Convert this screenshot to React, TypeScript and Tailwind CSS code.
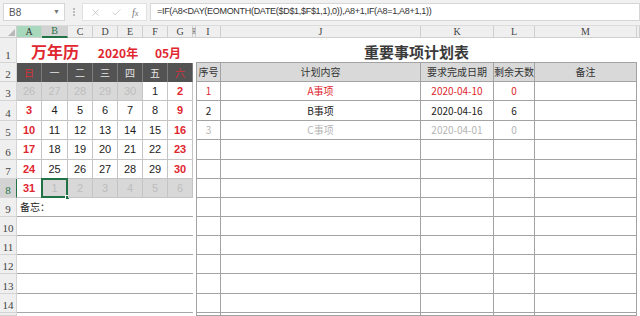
import React from 'react';
import { X, Check } from 'lucide-react';

const RED = 'text-[#e0262f]';
const cjk = { fontFamily: '"Noto Sans CJK SC", "Noto Sans", sans-serif' };
const serif = { fontFamily: '"Liberation Serif", "Noto Sans CJK SC", serif' };
const sans = { fontFamily: '"Liberation Sans", "Noto Sans CJK SC", sans-serif' };

const letters = ['A', 'B', 'C', 'D', 'E', 'F', 'G', 'H', 'I', 'J', 'K', 'L', 'M', ''];

type Day = { n: number; out?: boolean };
const weeks: Day[][] = [
  [{ n: 26, out: true }, { n: 27, out: true }, { n: 28, out: true }, { n: 29, out: true }, { n: 30, out: true }, { n: 1 }, { n: 2 }],
  [3, 4, 5, 6, 7, 8, 9].map((n) => ({ n })),
  [10, 11, 12, 13, 14, 15, 16].map((n) => ({ n })),
  [17, 18, 19, 20, 21, 22, 23].map((n) => ({ n })),
  [24, 25, 26, 27, 28, 29, 30].map((n) => ({ n })),
  [{ n: 31 }, { n: 1, out: true }, { n: 2, out: true }, { n: 3, out: true }, { n: 4, out: true }, { n: 5, out: true }, { n: 6, out: true }],
];

const weekNames = ['日', '一', '二', '三', '四', '五', '六'];

const tasks = [
  { no: '1', name: 'A事项', date: '2020-04-10', left: '0', color: 'text-[#e0262f]' },
  { no: '2', name: 'B事项', date: '2020-04-16', left: '6', color: 'text-[#222]' },
  { no: '3', name: 'C事项', date: '2020-04-01', left: '0', color: 'text-[#b5b5b5]' },
];

const RowHead: React.FC<{ n?: number; active?: boolean }> = ({ n, active }) => (
  <div
    className={`flex items-end justify-center pb-[1px] text-[11px] leading-none border-r border-b border-[#d4d4d4] ${
      active ? 'bg-[#d3d3d3] text-[#217346] border-r-[#217346]' : 'bg-[#efefef] text-[#444]'
    }`}
    style={serif}
  >
    {n}
  </div>
);

const TCell: React.FC<{ children?: React.ReactNode; className?: string; header?: boolean }> = ({ children, className = '', header }) => (
  <div
    className={`flex items-center justify-center whitespace-nowrap text-[10px] leading-none border-r border-b border-[#a3a3a3] ${
      header ? 'bg-[#d9d9d9] text-[#333]' : 'bg-white'
    } ${className}`}
    style={cjk}
  >
    {children}
  </div>
);

const TableRow: React.FC<{ t?: (typeof tasks)[number] }> = ({ t }) => (
  <>
    <div />
    <TCell className={`border-l ${t?.color ?? ''}`}>{t?.no}</TCell>
    <TCell className={t?.color}>{t?.name}</TCell>
    <TCell className={t?.color}>{t?.date}</TCell>
    <TCell className={t?.color}>{t?.left}</TCell>
    <TCell />
    <div />
  </>
);

export default function App() {
  return (
    <div className="w-[640px] h-[316px] overflow-hidden bg-white" style={sans}>
      {/* formula bar */}
      <div className="h-[26px] bg-[#f1f1f1] flex items-start pt-[3px] border-b border-[#dcdcdc]">
        <div className="ml-[3px] w-[62px] h-[18px] bg-white border border-[#d6d6d6] flex items-center justify-between pl-[5px] pr-[4px]">
          <span className="text-[10px] text-[#555]">B8</span>
          <span className="text-[7px] text-[#777]">▼</span>
        </div>
        <div className="w-[17px] flex flex-col items-center pt-[5px] gap-[1px]">
          <span className="w-[2px] h-[2px] bg-[#bbb]" />
          <span className="w-[2px] h-[2px] bg-[#bbb]" />
          <span className="w-[2px] h-[2px] bg-[#bbb]" />
        </div>
        <div className="w-[65px] h-[18px] bg-white border border-[#e0e0e0] flex items-center pl-[7px] gap-[10px] text-[#b9b9b9]">
          <X size={11} strokeWidth={1.5} />
          <Check size={11} strokeWidth={1.5} />
          <span className="text-[10px] italic text-[#777]" style={serif}>
            f<span className="text-[8px]">x</span>
          </span>
        </div>
        <div className="ml-[3px] flex-1 h-[18px] bg-white border border-[#d6d6d6] flex items-center pl-[6px]">
          <span className="text-[9px] tracking-[-0.3px] text-[#333] whitespace-nowrap" style={sans}>
            =IF(A8&lt;DAY(EOMONTH(DATE($D$1,$F$1,1),0)),A8+1,IF(A8=1,A8+1,1))
          </span>
        </div>
      </div>

      <div className="grid grid-cols-[17px_25px_26px_25px_25px_25px_25px_25px_3px_25px_200px_73px_41px_102px_1fr] grid-rows-[12px_25px_19px_19px_20px_19px_20px_19px_19px_19px_19px_19px_19px_20px_19px_1fr] h-[290px]">
        {/* column headers */}
        <div className="bg-[#efefef] border-r border-b border-[#cfcfcf] flex items-end justify-end pr-[1px] pb-[1px]">
          <svg width="7" height="7" viewBox="0 0 8 8">
            <polygon points="8,0 8,8 0,8" fill="#b8b8b8" />
          </svg>
        </div>
        {letters.map((l, i) => (
          <div
            key={i}
            className={`flex items-center justify-center text-[10px] leading-none border-r border-b overflow-visible whitespace-nowrap ${
              i === 0
                ? 'bg-[#a9d9bd] border-[#cfcfcf] text-[#333]'
                : i === 1
                ? 'bg-[#d3d3d3] border-r-[#cfcfcf] border-b-2 border-b-[#217346] text-[#217346]'
                : 'bg-[#efefef] border-[#cfcfcf] text-[#444]'
            }`}
            style={serif}
          >
            {i === 7 ? <span className="text-[8px] scale-x-50">H</span> : l}
          </div>
        ))}

        {/* row 1 */}
        <RowHead n={1} />
        <div className="col-span-3 flex items-end justify-center pb-[4px]">
          <span className={`text-[16px] leading-none font-bold ${RED}`} style={cjk}>
            万年历
          </span>
        </div>
        <div className="col-span-2 flex items-end justify-center pb-[4px]">
          <span className={`text-[12px] leading-none font-bold ${RED}`} style={cjk}>
            2020年
          </span>
        </div>
        <div className="col-span-2 flex items-end justify-center pb-[4px]">
          <span className={`text-[12px] leading-none font-bold ${RED}`} style={cjk}>
            05月
          </span>
        </div>
        <div />
        <div className="col-span-5 flex items-end justify-center pb-[3px] border-b border-[#a3a3a3]">
          <span className="text-[15px] leading-none font-bold text-[#3a3a3a]" style={cjk}>
            重要事项计划表
          </span>
        </div>
        <div />

        {/* row 2 */}
        <RowHead n={2} />
        {weekNames.map((w, i) => (
          <div
            key={w}
            className={`flex items-center justify-center text-[10px] leading-none bg-[#535353] border-r border-[#7d7d7d] ${
              i === 0 || i === 6 ? 'text-[#d9303a]' : 'text-[#e6e6e6]'
            }`}
            style={cjk}
          >
            {w}
          </div>
        ))}
        <div />
        <TCell header className="border-l">序号</TCell>
        <TCell header>计划内容</TCell>
        <TCell header>要求完成日期</TCell>
        <TCell header>剩余天数</TCell>
        <TCell header>备注</TCell>
        <div />

        {/* rows 3-8 */}
        {weeks.map((week, r) => (
          <React.Fragment key={r}>
            <RowHead n={r + 3} active={r === 5} />
            {week.map((d, c) => {
              const weekend = c === 0 || c === 6;
              const selected = r === 5 && c === 1;
              return (
                <div
                  key={c}
                  className={`relative flex items-center justify-center text-[11px] leading-none border-r border-b border-[#c4c4c4] ${
                    d.out
                      ? 'bg-[#d8d8d8] text-[#bdbdbd]'
                      : weekend
                      ? `bg-white font-bold ${RED}`
                      : 'bg-white text-[#222]'
                  }`}
                  style={sans}
                >
                  {d.n}
                  {selected && (
                    <>
                      <span className="absolute -inset-[1px] border-2 border-[#217346]" />
                      <span className="absolute -right-[3px] -bottom-[3px] w-[5px] h-[5px] bg-[#217346] border border-white" />
                    </>
                  )}
                </div>
              );
            })}
            <TableRow t={tasks[r]} />
          </React.Fragment>
        ))}

        {/* rows 9-15 */}
        {[9, 10, 11, 12, 13, 14, 15].map((n) => (
          <React.Fragment key={n}>
            <RowHead n={n < 15 ? n : undefined} />
            <div
              className={`col-span-7 flex items-center pl-[3px] text-[10px] leading-none text-[#222] ${
                n < 15 ? 'border-b border-[#a6a6a6]' : ''
              }`}
              style={cjk}
            >
              {n === 9 ? '备忘：' : ''}
            </div>
            <TableRow />
          </React.Fragment>
        ))}
      </div>
    </div>
  );
}
